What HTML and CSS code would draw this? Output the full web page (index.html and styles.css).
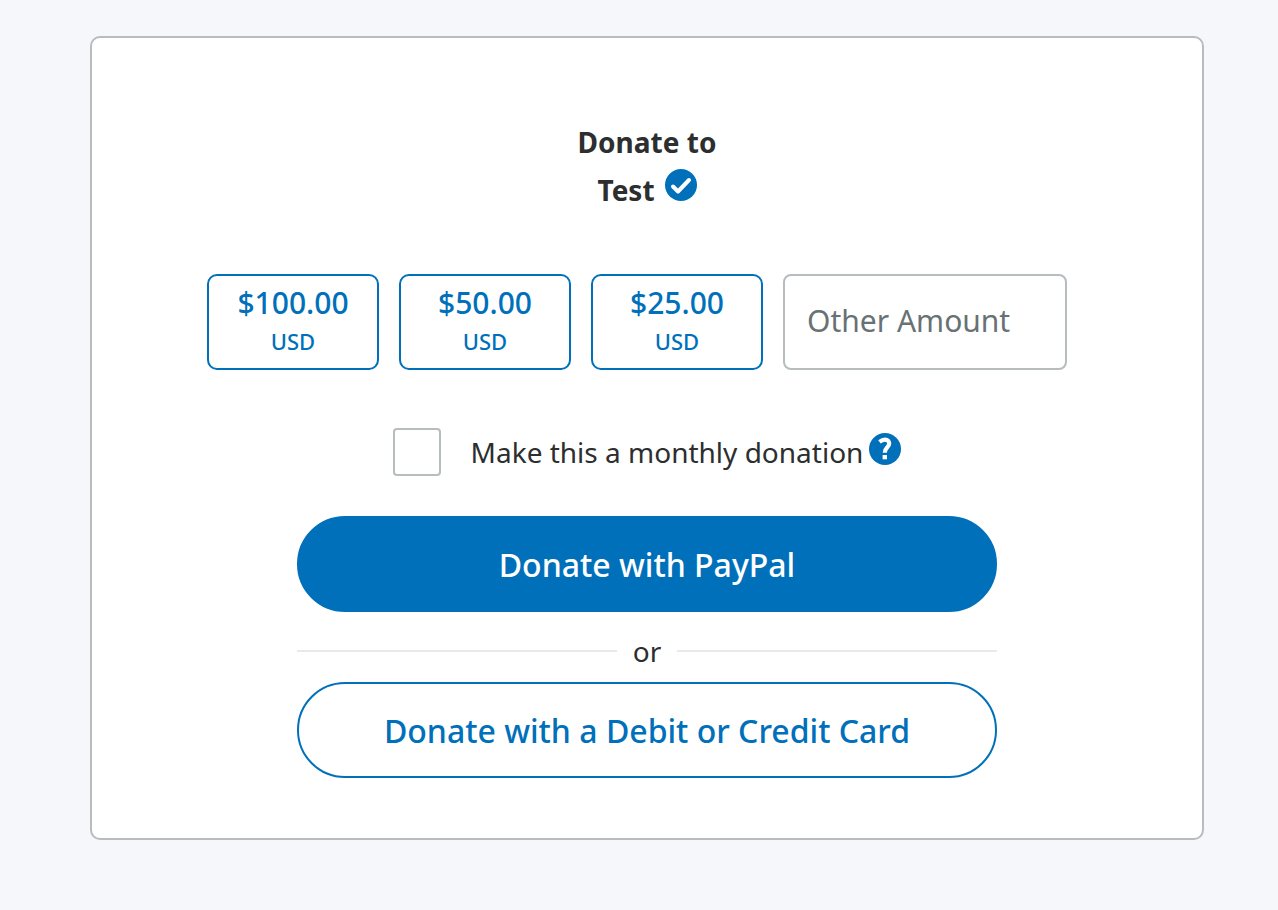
FILE: index.html
```html
<!DOCTYPE html>
<html lang="en">
<head>
    <meta charset="UTF-8">
    <meta name="viewport" content="width=device-width, initial-scale=1.0">
    <title>Donate</title>
    <link rel="stylesheet" href="styles.css">
</head>
<body>
    <main class="card">
        <h1 class="title">
            <span>Donate to</span>
            <span class="recipient">
                Test
                <svg class="icon" viewBox="0 0 32 32" role="img" aria-label="Verified">
                    <circle cx="16" cy="16" r="16" fill="#0070ba"/>
                    <path d="M8 17.500l5 5L24 11" fill="none" stroke="#fff" stroke-width="4" stroke-linecap="round" stroke-linejoin="round"/>
                </svg>
            </span>
        </h1>

        <form class="donate-form">
            <div class="amounts">
                <button type="button" class="amount">$100.00 <span class="currency">USD</span></button>
                <button type="button" class="amount">$50.00 <span class="currency">USD</span></button>
                <button type="button" class="amount">$25.00 <span class="currency">USD</span></button>
                <input type="text" class="other-amount" placeholder="Other Amount" aria-label="Other Amount">
            </div>

            <div class="monthly">
                <input type="checkbox" id="monthly" class="checkbox">
                <label for="monthly">Make this a monthly donation</label>
                <button type="button" class="help" aria-label="Help">
                    <svg class="icon" viewBox="0 0 32 32">
                        <circle cx="16" cy="16" r="16" fill="#0070ba"/>
                        <path d="M10.500 8.800C12.500 7.200 14.300 6.600 16 6.600c2.700 0 4.200 1.700 4.200 3.900 0 4-4.400 3.500-4.400 9.200" fill="none" stroke="#fff" stroke-width="4.200"/>
                        <rect x="13.600" y="22" width="4.400" height="4.300" fill="#fff"/>
                    </svg>
                </button>
            </div>

            <div class="actions">
                <button type="submit" class="btn btn-primary">Donate with PayPal</button>
                <div class="divider">or</div>
                <button type="button" class="btn btn-outline">Donate with a Debit or Credit Card</button>
            </div>
        </form>
    </main>
</body>
</html>
```
FILE: styles.css
```css
* {
    box-sizing: border-box;
    margin: 0;
    padding: 0;
}

body {
    padding: 36px 74px 70px 90px;
    background-color: #f5f7fb;
    color: #2c2e2f;
    font-family: "Noto Sans", sans-serif;
    font-size: 28px;
    line-height: 48px;
}

button, input {
    font-family: inherit;
    font-size: inherit;
}

button {
    cursor: pointer;
}

.card {
    padding: 80px 20px 60px;
    background-color: #fff;
    border: 2px solid #b7bcbf;
    border-radius: 10px;
}

.title {
    display: flex;
    flex-direction: column;
    align-items: center;
    font-size: 28px;
    font-weight: 700;
}

.recipient {
    display: flex;
    gap: 10px;
}

.icon {
    display: block;
    width: 32px;
    height: 32px;
}

.recipient .icon {
    margin-top: 3px;
}

/* amounts */
.amounts {
    display: flex;
    justify-content: center;
    gap: 20px;
    margin-top: 60px;
    padding-right: 20px;
}

.amount {
    width: 172px;
    height: 96px;
    background-color: #fff;
    border: 2px solid #0070ba;
    border-radius: 10px;
    color: #0070ba;
    font-size: 30px;
    font-weight: 500;
    line-height: 38px;
}

.currency {
    display: block;
    font-size: 22px;
}

.other-amount {
    width: 284px;
    height: 96px;
    padding: 0 22px 4px;
    background-color: #fff;
    border: 2px solid #b7bcbf;
    border-radius: 8px;
    color: #2c2e2f;
    font-size: 30px;
}

.other-amount::placeholder {
    color: #687173;
    opacity: 1;
}

/* monthly option */
.monthly {
    display: flex;
    justify-content: center;
    align-items: center;
    margin-top: 58px;
}

.checkbox {
    width: 48px;
    height: 48px;
    margin-right: 30px;
    appearance: none;
    background-color: #fff;
    border: 2px solid #b7bcbf;
    border-radius: 4px;
}

.checkbox:checked {
    background-color: #0070ba;
    border-color: #0070ba;
}

.help {
    align-self: flex-start;
    margin: 5px 0 0 6px;
    background: none;
    border: none;
    border-radius: 50%;
}

/* buttons */
.actions {
    max-width: 700px;
    margin: 40px auto 0;
}

.btn {
    display: block;
    width: 100%;
    height: 96px;
    border: 2px solid #0070ba;
    border-radius: 48px;
    font-size: 32px;
    font-weight: 500;
}

.btn-primary {
    background-color: #0070ba;
    color: #fff;
}

.btn-outline {
    background-color: #fff;
    color: #0070ba;
}

.divider {
    display: flex;
    align-items: center;
    gap: 16px;
    padding: 15px 0 7px;
}

.divider::before,
.divider::after {
    content: '';
    flex: 1;
    height: 2px;
    background-color: #e9e9e9;
}
```
